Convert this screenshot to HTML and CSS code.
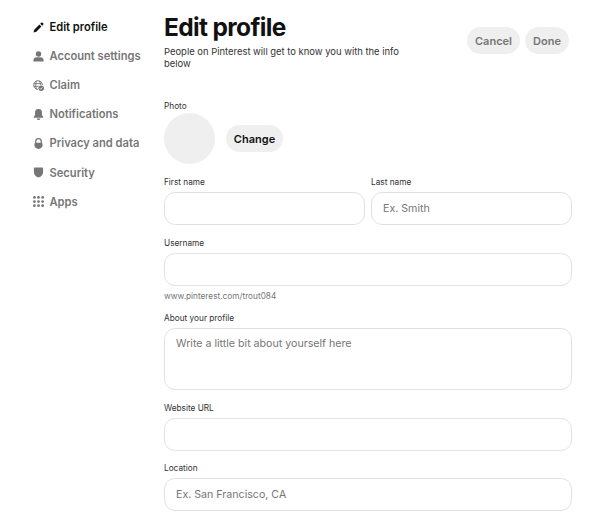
FILE: index.html
```html
<!DOCTYPE html>
<html lang="en">
<head>
<meta charset="utf-8">
<title>Edit profile</title>
<link rel="stylesheet" href="styles.css">
</head>
<body>
<div class="page">
  <nav class="sidebar">
    <a class="nav-item active"><svg class="icon" viewBox="0 0 24 24"><path d="M1 23l1.800-6.200L14 5.600l4.400 4.400L7.200 21.200zM15.800 3.800l2-2a2.400 2.400 0 0 1 3.400 0l1 1a2.400 2.400 0 0 1 0 3.400l-2 2z"/></svg><span>Edit profile</span></a>
    <a class="nav-item"><svg class="icon" viewBox="0 0 24 24"><circle cx="12" cy="6.500" r="6"/><path d="M1 23v-3c0-4 3-6.500 7-6.500h8c4 0 7 2.500 7 6.500v3z"/></svg><span>Account settings</span></a>
    <a class="nav-item"><svg class="icon" viewBox="0 0 24 24"><g fill="none" stroke="currentColor" stroke-width="2"><path d="M11 20.500A9.500 9.500 0 1 1 20.500 11M1.500 8h17.500M1.500 14h11M8.500 20C5 15 5 7 8.500 2M13.500 2c2 3 2.700 6 2.500 9"/></g><circle cx="18" cy="18" r="6"/><path d="M15 18l2 2 4-4" fill="none" stroke="#fff" stroke-width="1.700"/></svg><span>Claim</span></a>
    <a class="nav-item"><svg class="icon" viewBox="0 0 24 24"><path d="M12 0a7.500 7.500 0 0 0-7.500 7.500v4.500C4.500 14 1.500 16 1.500 19h21c0-3-3-5-3-7V7.500A7.500 7.500 0 0 0 12 0zM8 20.500h8a4 3.500 0 0 1-8 0z"/></svg><span>Notifications</span></a>
    <a class="nav-item"><svg class="icon" viewBox="0 0 24 24"><path fill-rule="evenodd" d="M12 0a7.500 7.500 0 0 0-7.500 7.500v3A8.500 8.500 0 0 0 3 15.500C3 20.500 7 24 12 24s9-3.500 9-8.500a8.500 8.500 0 0 0-1.500-5v-3A7.500 7.500 0 0 0 12 0zM7.300 10.500v-3a4.700 4.700 0 0 1 9.400 0v3z"/></svg><span>Privacy and data</span></a>
    <a class="nav-item"><svg class="icon" viewBox="0 0 24 24"><path d="M4 1h16a2 2 0 0 1 2 2v8c0 6-4 10-10 12C6 21 2 17 2 11V3a2 2 0 0 1 2-2z"/></svg><span>Security</span></a>
    <a class="nav-item"><svg class="icon" viewBox="0 0 24 24"><circle cx="3" cy="3" r="3"/><circle cx="12" cy="3" r="3"/><circle cx="21" cy="3" r="3"/><circle cx="3" cy="12" r="3"/><circle cx="12" cy="12" r="3"/><circle cx="21" cy="12" r="3"/><circle cx="3" cy="21" r="3"/><circle cx="12" cy="21" r="3"/><circle cx="21" cy="21" r="3"/></svg><span>Apps</span></a>
  </nav>
  <main class="content">
    <header class="header">
      <div class="intro">
        <h1 class="title">Edit profile</h1>
        <p class="subtitle">People on Pinterest will get to know you with the info below</p>
      </div>
      <div class="actions">
        <button class="button cancel">Cancel</button>
        <button class="button done">Done</button>
      </div>
    </header>
    <section class="photo">
      <span class="label">Photo</span>
      <div class="photo-row">
        <div class="avatar"></div>
        <button class="button change">Change</button>
      </div>
    </section>
    <div class="names">
      <label class="field"><span class="label">First name</span><input class="input" type="text"></label>
      <label class="field"><span class="label">Last name</span><input class="input" type="text" placeholder="Ex. Smith"></label>
    </div>
    <label class="field username"><span class="label">Username</span><input class="input" type="text"><span class="hint">www.pinterest.com/trout084</span></label>
    <label class="field about"><span class="label">About your profile</span><textarea class="input area" placeholder="Write a little bit about yourself here"></textarea></label>
    <label class="field website"><span class="label">Website URL</span><input class="input" type="text"></label>
    <label class="field location"><span class="label">Location</span><input class="input" type="text" placeholder="Ex. San Francisco, CA"></label>
  </main>
</div>
</body>
</html>
```
FILE: styles.css
```css
* { box-sizing: border-box; }
body {
  margin: 0;
  background: #fff;
  color: #111;
  font-family: Inter, "Liberation Sans", sans-serif;
}
.page {
  display: grid;
  grid-template-columns: 131px 408px;
  height: 529px;
  padding-left: 33px;
  overflow: hidden;
}
.sidebar { padding-top: 12.500px; }
.nav-item {
  display: flex;
  align-items: center;
  gap: 5.500px;
  height: 29.100px;
  color: #767676;
  font-size: 11.150px;
  font-weight: 600;
  white-space: nowrap;
}
.nav-item.active { color: #111; }
.icon { width: 11px; height: 11px; fill: currentColor; flex: none; }
.header { display: flex; justify-content: space-between; height: 99px; }
.intro { width: 250px; padding-top: 12px; }
.title {
  margin: 0;
  font-size: 24.500px;
  line-height: 30px;
  font-weight: 700;
  letter-spacing: -0.650px;
  white-space: nowrap;
}
.subtitle { margin: 4px 0 0; font-size: 9.430px; line-height: 11.500px; color: #333; }
.actions { display: flex; gap: 5px; padding: 27px 3px 0 0; }
.button {
  height: 27px;
  padding: 0;
  border: 0;
  border-radius: 14px;
  background: #efefef;
  color: #767676;
  font: 600 11px Inter, sans-serif;
}
.cancel { width: 53px; }
.done { width: 44px; }
.change { width: 57px; color: #111; }
.label { display: block; height: 14px; font-size: 8.250px; line-height: 14px; color: #333; white-space: nowrap; }
.photo-row { display: flex; align-items: center; gap: 11px; }
.avatar { width: 51px; height: 51px; border-radius: 50%; background: #efefef; }
.names { display: grid; grid-template-columns: 1fr 1fr; gap: 6px; margin-top: 11px; }
.field { display: block; }
.input {
  display: block;
  width: 100%;
  height: 33px;
  margin: 3px 0 0;
  padding: 0 11px;
  border: 1px solid #e2e2e2;
  border-radius: 11px;
  outline: 0;
  background: #fff;
  color: #111;
  font: 400 10.650px/14px Inter, sans-serif;
  resize: none;
}
.input::placeholder { color: #767676; opacity: 1; }
.username { margin-top: 11px; }
.hint { display: block; height: 14px; margin-top: 3px; font-size: 8.250px; line-height: 14px; color: #767676; }
.about { margin-top: 8px; }
.area { height: 62px; padding-top: 8px; }
.website { margin-top: 11px; }
.location { margin-top: 10px; }
```
